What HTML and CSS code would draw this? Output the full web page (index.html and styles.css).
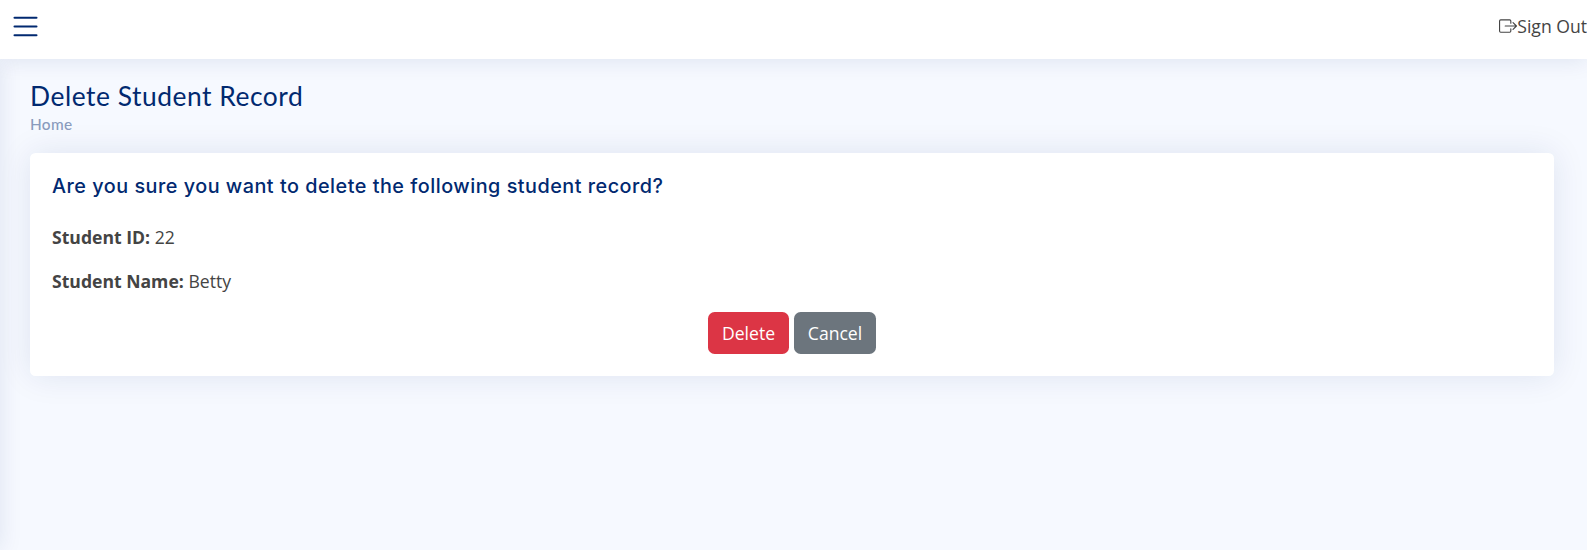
FILE: index.html
```html
<!DOCTYPE html>
<html lang="en">
<head>
<meta charset="utf-8">
<title>Delete Student Record</title>
<link rel="stylesheet" href="styles.css">
</head>
<body>
<header class="header">
  <svg class="menu-icon" viewBox="0 0 16 16" fill="currentColor"><path fill-rule="evenodd" d="M2.5 12a.5.5 0 0 1 .5-.5h10a.5.5 0 0 1 0 1H3a.5.5 0 0 1-.5-.5zm0-4a.5.5 0 0 1 .5-.5h10a.5.5 0 0 1 0 1H3a.5.5 0 0 1-.5-.5zm0-4a.5.5 0 0 1 .5-.5h10a.5.5 0 0 1 0 1H3a.5.5 0 0 1-.5-.5z"/></svg>
  <a class="sign-out" href="#"><svg class="exit-icon" viewBox="0 0 16 16" fill="currentColor"><path fill-rule="evenodd" d="M10 12.5a.5.5 0 0 1-.5.5h-8a.5.5 0 0 1-.5-.5v-9a.5.5 0 0 1 .5-.5h8a.5.5 0 0 1 .5.5v2a.5.5 0 0 0 1 0v-2A1.500 1.500 0 0 0 9.500 2h-8A1.500 1.500 0 0 0 0 3.500v9A1.500 1.500 0 0 0 1.500 14h8a1.500 1.500 0 0 0 1.500-1.500v-2a.5.5 0 0 0-1 0v2z"/><path fill-rule="evenodd" d="M15.854 8.354a.5.5 0 0 0 0-.708l-3-3a.5.5 0 0 0-.708.708L14.293 7.500H5.500a.5.5 0 0 0 0 1h8.793l-2.147 2.146a.5.5 0 0 0 .708.708l3-3z"/></svg><span class="sign-text">Sign Out</span></a>
</header>
<div class="page">
  <aside class="sidebar-edge"></aside>
  <main class="main">
    <h1 class="title">Delete Student Record</h1>
    <nav class="breadcrumb"><span>Home</span></nav>
    <section class="card">
      <h5 class="card-title">Are you sure you want to delete the following student record?</h5>
      <p class="field"><strong>Student ID:</strong> 22</p>
      <p class="field"><strong>Student Name:</strong> Betty</p>
      <div class="actions">
        <button class="btn danger">Delete</button>
        <button class="btn secondary">Cancel</button>
      </div>
    </section>
  </main>
</div>
</body>
</html>
```
FILE: styles.css
```css
* { box-sizing: border-box; }
body {
  margin: 0;
  height: 550px;
  overflow: hidden;
  background: #f6f9ff;
  color: #444;
  font: 17.6px/26.4px "Open Sans", sans-serif;
}
.header {
  position: relative;
  z-index: 2;
  height: 59px;
  display: flex;
  justify-content: space-between;
  align-items: flex-start;
  padding: 9px 0 0 8px;
  background: #fff;
  box-shadow: 0 2px 22px rgba(1, 41, 112, .1);
}
.menu-icon { width: 35px; height: 35px; color: #012970; }
.sign-out { display: flex; align-items: center; padding-top: 4px; color: #444; text-decoration: none; }
.exit-icon { width: 18px; height: 18px; }
.page { display: flex; height: 491px; }
.sidebar-edge { flex: none; width: 100px; margin-left: -100px; box-shadow: 0 0 22px rgba(1, 41, 112, .1); }
.main { flex: 1; padding: 21px 33px 0 30px; }
.title {
  margin: 0;
  font: 400 26.4px/32px Lato, sans-serif;
  letter-spacing: .53px;
  color: #012970;
}
.breadcrumb {
  height: 41px;
  font: 500 15.4px/24px Lato, sans-serif;
  letter-spacing: .3px;
  color: #899bbd;
}
.card {
  height: 223px;
  padding: 21px 22px;
  background: #fff;
  border-radius: 5.5px;
  box-shadow: 0 0 33px rgba(1, 41, 112, .1);
}
.card-title {
  margin: 0 0 26px;
  font: 450 19.8px/24px Inter, sans-serif;
  letter-spacing: .51px;
  color: #012970;
}
.field { margin: 0 0 17.6px; }
.field strong { font-weight: 700; }
.actions { display: flex; justify-content: center; gap: 5px; }
.btn {
  width: 81px;
  height: 42px;
  padding: 0;
  border: 0;
  border-radius: 6.6px;
  color: #fff;
  font: inherit;
}
.danger { background: #dc3545; }
.secondary { width: 82px; background: #6c757d; }
```
